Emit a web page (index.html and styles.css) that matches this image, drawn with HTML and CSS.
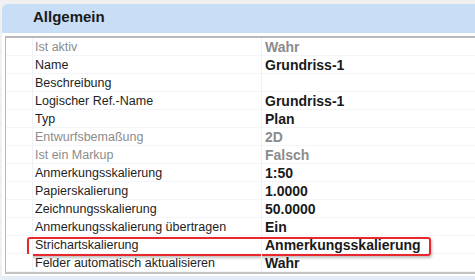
FILE: index.html
```html
<!DOCTYPE html>
<html lang="de">
<head>
    <meta charset="UTF-8">
    <title>Allgemein</title>
    <link rel="stylesheet" href="styles.css">
</head>
<body>
    <div class="section">
        <div class="section-header">Allgemein</div>
        <div class="section-body">
            <div class="props">
                <div class="row disabled"><div class="gutter"></div><div class="label">Ist aktiv</div><div class="value">Wahr</div></div>
                <div class="row"><div class="gutter"></div><div class="label">Name</div><div class="value">Grundriss-1</div></div>
                <div class="row"><div class="gutter"></div><div class="label">Beschreibung</div><div class="value"></div></div>
                <div class="row"><div class="gutter"></div><div class="label">Logischer Ref.-Name</div><div class="value">Grundriss-1</div></div>
                <div class="row"><div class="gutter"></div><div class="label">Typ</div><div class="value">Plan</div></div>
                <div class="row disabled"><div class="gutter"></div><div class="label">Entwurfsbemaßung</div><div class="value">2D</div></div>
                <div class="row disabled"><div class="gutter"></div><div class="label">Ist ein Markup</div><div class="value">Falsch</div></div>
                <div class="row"><div class="gutter"></div><div class="label">Anmerkungsskalierung</div><div class="value">1:50</div></div>
                <div class="row"><div class="gutter"></div><div class="label">Papierskalierung</div><div class="value">1.0000</div></div>
                <div class="row"><div class="gutter"></div><div class="label">Zeichnungsskalierung</div><div class="value">50.0000</div></div>
                <div class="row"><div class="gutter"></div><div class="label">Anmerkungsskalierung übertragen</div><div class="value">Ein</div></div>
                <div class="row marked"><div class="gutter"></div><div class="label">Strichartskalierung</div><div class="value">Anmerkungsskalierung</div><div class="highlight"></div></div>
                <div class="row"><div class="gutter"></div><div class="label">Felder automatisch aktualisieren</div><div class="value">Wahr</div></div>
            </div>
        </div>
        <div class="next-section"></div>
    </div>
</body>
</html>
```
FILE: styles.css
```css
body {
    font-family: 'Liberation Sans', Arial, sans-serif;
    background-color: #f0f0f0;
    margin: 0;
    padding: 4px 0 0 2px;
    overflow: hidden;
}
.section-header {
    background-color: #c8ddf6;
    border-top-left-radius: 6px;
    height: 29px;
    line-height: 26px;
    padding-left: 31px;
    font-size: 15px;
    font-weight: bold;
    color: #1a1a1a;
}
.section-body {
    background-color: #fff;
    padding: 3px 0 2px 3px;
}
.props {
    border-top: 2px solid #b8b8b8;
    border-left: 1px solid #b8b8b8;
    border-bottom: 2px solid #c4c4c4;
}
.row {
    position: relative;
    display: flex;
    height: 17px;
    line-height: 18px;
    font-size: 12.5px;
    border-bottom: 1px solid #f3f5f8;
}
.gutter {
    width: 26px;
    background-color: #fff;
    border-right: 1px solid #eef1f5;
}
.label {
    box-sizing: border-box;
    width: 229px;
    padding-left: 2px;
    color: #1e1e1e;
    border-right: 1px solid #eef1f5;
}
.value {
    flex: 1;
    padding-left: 3px;
    font-size: 14px;
    font-weight: bold;
    color: #1a1a1a;
}
.disabled .label,
.disabled .value {
    color: #8c8c8c;
}
.highlight {
    position: absolute;
    left: 21px;
    top: 1px;
    width: 400px;
    height: 15px;
    border: 2px solid #e8282c;
    border-radius: 3px;
    box-shadow: 1px 2px 3px rgba(0, 0, 0, 0.25);
}
.next-section {
    height: 10px;
    background-color: #e4ecf7;
}
```
